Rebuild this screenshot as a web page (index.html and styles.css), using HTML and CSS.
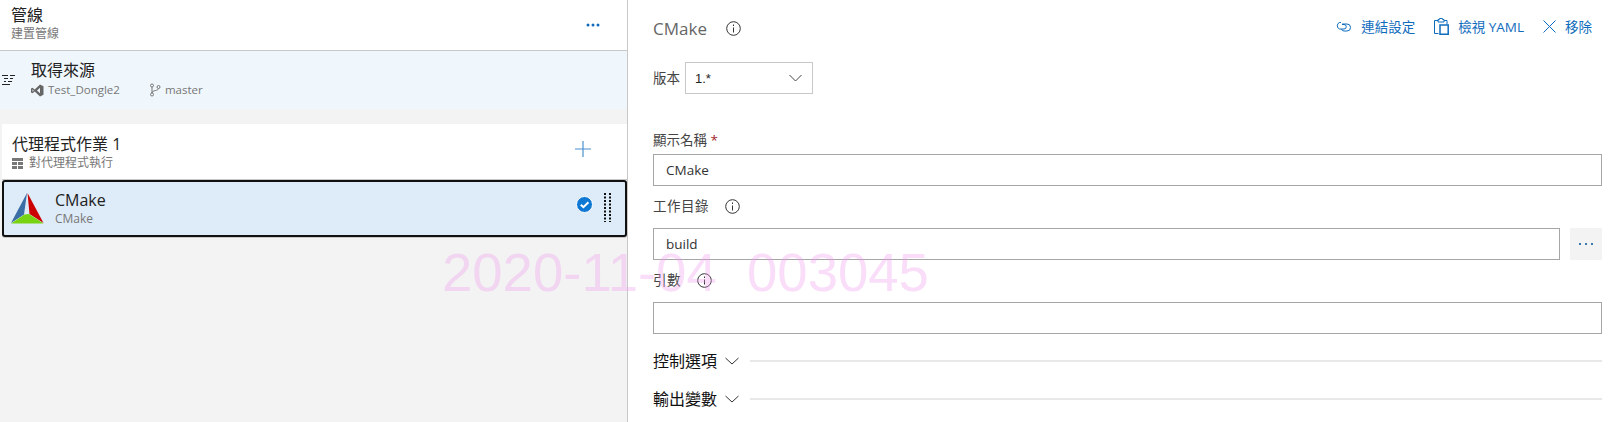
FILE: index.html
```html
<!DOCTYPE html>
<html lang="zh-Hant">
<head>
<meta charset="utf-8">
<title>CMake</title>
<link rel="stylesheet" href="styles.css">
</head>
<body>
<div class="app">
  <aside class="left">
    <header class="pipe-head">
      <div>
        <div class="t15">管線</div>
        <div class="sub">建置管線</div>
      </div>
      <svg class="more" width="14" height="4" viewBox="0 0 14 4"><g fill="#0f6cbd"><circle cx="2" cy="2" r="1.5"/><circle cx="7" cy="2" r="1.5"/><circle cx="12" cy="2" r="1.5"/></g></svg>
    </header>
    <section class="source">
      <svg class="src-ico" width="16" height="14" viewBox="0 0 16 14"><g stroke="#222" stroke-width="1" fill="none"><path d="M1 1.500h6M9 1.500h5M3 4.500h4M9 4.500h3M3 7.500h2M7 7.500h4M1 10.500h8"/></g></svg>
      <div class="src-body">
        <div class="t15">取得來源</div>
        <div class="src-meta">
          <svg width="13" height="13" viewBox="0 0 13 13"><path fill="#666" d="M9 .5l3.500 1.700v8.600L9 12.500 3.700 7.600 1.500 9.300 0 8.500v-4l1.500-.8 2.200 1.700zM9 3.700L6 6.500l3 2.800zM1.500 5.200v2.600L2.800 6.500z"/></svg>
          <span class="repo">Test_Dongle2</span>
          <svg class="branch" width="12" height="14" viewBox="0 0 12 14"><g fill="none" stroke="#777"><circle cx="3" cy="2.500" r="1.500"/><circle cx="3" cy="11.500" r="1.500"/><circle cx="9.500" cy="4" r="1.500"/><path d="M3 4v6M9.500 5.500C9.500 8 3 7 3 10"/></g></svg>
          <span>master</span>
        </div>
      </div>
    </section>
    <section class="job">
      <div>
        <div class="t15">代理程式作業 1</div>
        <div class="sub job-sub">
          <svg width="11" height="11" viewBox="0 0 11 11"><path fill="#777" d="M0 0h11v3H0zM0 4h5v3H0zM6 4h5v3H6zM0 8h5v3H0zM6 8h5v3H6z"/></svg>
          <span>對代理程式執行</span>
        </div>
      </div>
      <svg class="plus" width="18" height="18" viewBox="0 0 18 18"><path d="M9 1v16M1 9h16" stroke="#0f6cbd" stroke-opacity=".75" stroke-width="1.200"/></svg>
    </section>
    <section class="task">
      <svg class="logo" width="33" height="31" viewBox="0 0 33 31">
        <path fill="#3a6ea5" d="M16 0 0 30 13 21.500z"/>
        <path fill="#cc0000" d="M16.500 0 32.500 30 18.500 21z"/>
        <path fill="#78d313" d="M0 30.500 13.500 21.500 18 21 32.500 30.500z"/>
      </svg>
      <div class="task-body">
        <div class="t15">CMake</div>
        <div class="task-sub">CMake</div>
      </div>
      <svg class="check" width="17" height="17" viewBox="0 0 17 17"><circle cx="8.500" cy="8.500" r="8" fill="#0f78d4" stroke="#fff"/><path d="M4.800 8.800l2.600 2.400 5-5" fill="none" stroke="#fff" stroke-width="2"/></svg>
      <svg class="grip" width="8" height="29" viewBox="0 0 8 29"><path stroke="#111" stroke-width="2" stroke-dasharray="2 1.500" fill="none" d="M1 0v29M6 0v29"/></svg>
    </section>
  </aside>
  <main class="right">
    <header class="task-head">
      <h1 class="task-title">CMake</h1>
      <svg class="info" width="15" height="15" viewBox="0 0 15 15"><circle cx="7.500" cy="7.500" r="6.800" fill="none" stroke="#333"/><path d="M7.500 6.500v5M7.500 3.500v1.500" stroke="#333"/></svg>
      <nav class="actions">
        <a class="action">
          <svg width="17" height="11" viewBox="0 0 17 11"><g fill="none" stroke="#0f6cbd"><path d="M6 1.500H4.500a3.500 3.500 0 0 0 0 6.500H9a2.200 2.200 0 0 0 0-4.500H7"/><path d="M7 3h5a3.500 3.500 0 0 1 0 7H9a2.500 2.500 0 0 1-2.500-2"/></g></svg>
          <span>連結設定</span>
        </a>
        <a class="action">
          <svg width="15" height="17" viewBox="0 0 15 17"><g fill="none" stroke="#0f6cbd"><path d="M4.500 15.500H.5v-13h4M10 2.500h3v4"/><path d="M4 4V1.500h1.500V.5h3v1H10V4z"/><path stroke-width="1.500" d="M6 7h8.200v9.200H6z"/></g></svg>
          <span>檢視 YAML</span>
        </a>
        <a class="action">
          <svg width="13" height="13" viewBox="0 0 13 13"><path d="M.5.500l12 12M12.500.500l-12 12" stroke="#0f6cbd" fill="none"/></svg>
          <span>移除</span>
        </a>
      </nav>
    </header>
    <div class="version">
      <span class="lbl">版本</span>
      <div class="select">
        <span>1.*</span>
        <svg width="13" height="8" viewBox="0 0 13 8"><path d="M.5 1l6 6 6-6" fill="none" stroke="#444"/></svg>
      </div>
    </div>
    <div class="field-name">
      <div class="lbl">顯示名稱 <span class="req">*</span></div>
      <div class="input">CMake</div>
    </div>
    <div class="field-dir">
      <div class="lbl lbl-ico">工作目錄
        <svg class="info-b" width="15" height="15" viewBox="0 0 15 15"><circle cx="7.500" cy="7.500" r="6.800" fill="none" stroke="#333"/><path d="M7.500 6.500v5M7.500 3.500v1.500" stroke="#333"/></svg>
      </div>
      <div class="input-row">
        <div class="input grow">build</div>
        <div class="dots">
          <svg width="15" height="3" viewBox="0 0 15 3"><path fill="#3a78b0" d="M0 0h2v2H0zM6 0h2v2H6zM12 0h2v2h-2z"/></svg>
        </div>
      </div>
    </div>
    <div class="field-args">
      <div class="lbl lbl-ico">引數
        <svg class="info-b" width="15" height="15" viewBox="0 0 15 15"><circle cx="7.500" cy="7.500" r="6.800" fill="none" stroke="#333"/><path d="M7.500 6.500v5M7.500 3.500v1.500" stroke="#333"/></svg>
      </div>
      <div class="input"></div>
    </div>
    <div class="group first">
      <span class="group-name">控制選項</span>
      <svg width="14" height="8" viewBox="0 0 14 8"><path d="M.5 1l6.500 6 6.500-6" fill="none" stroke="#333"/></svg>
      <span class="rule"></span>
    </div>
    <div class="group">
      <span class="group-name">輸出變數</span>
      <svg width="14" height="8" viewBox="0 0 14 8"><path d="M.5 1l6.500 6 6.500-6" fill="none" stroke="#333"/></svg>
      <span class="rule"></span>
    </div>
  </main>
  <div class="watermark">2020-11-04&nbsp;&nbsp;003045</div>
</div>
</body>
</html>
```
FILE: styles.css
```css
* { box-sizing: border-box; }
html, body { margin: 0; height: 100%; overflow: hidden; }
body {
  background: #fff;
  color: #222;
  font-family: "Open Sans", "Noto Sans CJK TC", sans-serif;
  font-size: 13px;
}
svg { display: block; flex: none; }
.app { position: relative; display: flex; height: 422px; }

.left {
  width: 628px;
  flex: none;
  background: #f3f3f3;
  border-right: 1px solid #c8c8c8;
}
.t15 { font-size: 16px; line-height: 20px; color: #222; }
.sub { font-size: 12px; line-height: 16px; color: #777; }

.pipe-head {
  height: 51px;
  padding: 5px 27px 0 11px;
  background: #fff;
  border-bottom: 1px solid #c8c8c8;
  display: flex;
  justify-content: space-between;
}
.pipe-head .sub { margin-top: 1px; }
.more { margin-top: 18px; }

.source {
  height: 58px;
  background: #eff6fc;
  display: flex;
  padding: 9px 0 0 1px;
}
.src-ico { margin: 14px 14px 0 0; }
.src-meta {
  display: flex;
  align-items: center;
  gap: 4px;
  margin-top: 2px;
  font-size: 11.5px;
  line-height: 16px;
  color: #777;
}
.repo { margin-right: 25px; }

.job {
  height: 56px;
  margin: 15px 0 0 2px;
  background: #fff;
  border-bottom: 1px solid #c8c8c8;
  display: flex;
  justify-content: space-between;
  padding: 10px 35px 0 10px;
}
.job-sub { display: flex; align-items: center; gap: 6px; margin-top: 1px; }
.plus { margin-top: 6px; }

.task {
  height: 57px;
  margin-left: 2px;
  background: #deebf8;
  border: 2px solid #111;
  border-radius: 3px;
  box-shadow: 0 1px 0 #c8c8c8;
  display: flex;
  align-items: center;
  padding-left: 7px;
}
.logo { margin-right: 11px; }
.task-body { flex: 1; }
.task-sub { font-size: 12px; line-height: 16px; color: #777; margin-top: 1px; }
.check { margin-right: 11px; margin-top: -8px; }
.grip { margin-right: 13px; margin-top: -2px; }

.right { flex: 1; min-width: 0; padding: 0 16px 0 25px; }
.task-head { height: 62px; display: flex; align-items: flex-start; padding-top: 17px; }
.task-title { margin: 0; font-size: 17px; line-height: 23px; font-weight: 400; color: #666; }
.info { margin: 4px 0 0 19px; }
.actions { margin-left: auto; margin-right: 10px; display: flex; gap: 19px; }
.action {
  display: flex;
  align-items: center;
  gap: 9px;
  height: 18px;
  font-size: 13.5px;
  color: #0f6cbd;
}

.version { display: flex; align-items: center; gap: 5px; height: 32px; }
.lbl { font-size: 13.5px; line-height: 18px; color: #444; }
.select {
  width: 128px;
  height: 32px;
  border: 1px solid #c8c8c8;
  display: flex;
  align-items: center;
  justify-content: space-between;
  padding: 0 10px 0 9px;
  font-family: "Liberation Sans", sans-serif;
  font-size: 13px;
}
.req { color: #a4262c; }
.field-name { margin-top: 37px; }
.field-name .lbl { margin-bottom: 5px; }
.input {
  height: 32px;
  border: 1px solid #a6a6a6;
  padding: 0 12px;
  display: flex;
  align-items: center;
  font-size: 13.5px;
  color: #333;
}
.field-dir { margin-top: 10px; }
.lbl-ico { display: flex; align-items: center; gap: 16px; height: 20px; letter-spacing: .5px; }
.field-dir .lbl-ico { margin-bottom: 12px; }
.input-row { display: flex; gap: 10px; }
.grow { flex: 1; }
.dots {
  width: 32px;
  height: 32px;
  background: #f3f3f3;
  display: flex;
  align-items: center;
  justify-content: center;
}
.field-args { margin-top: 10px; }
.field-args .lbl-ico { margin-bottom: 12px; }
.group { display: flex; align-items: center; height: 24px; }
.group.first { margin-top: 14px; margin-bottom: 14px; }
.group-name { font-size: 16px; color: #111; }
.group svg { margin: 2px 0 0 8px; }
.rule { flex: 1; height: 2px; margin: 2px 0 0 11px; background: #e8e8e8; }

.watermark {
  position: absolute;
  left: 442px;
  top: 243px;
  font-family: "Liberation Sans", sans-serif;
  font-size: 54.5px;
  line-height: 60px;
  white-space: nowrap;
  color: #ee99ee;
  opacity: .32;
  pointer-events: none;
}
```
